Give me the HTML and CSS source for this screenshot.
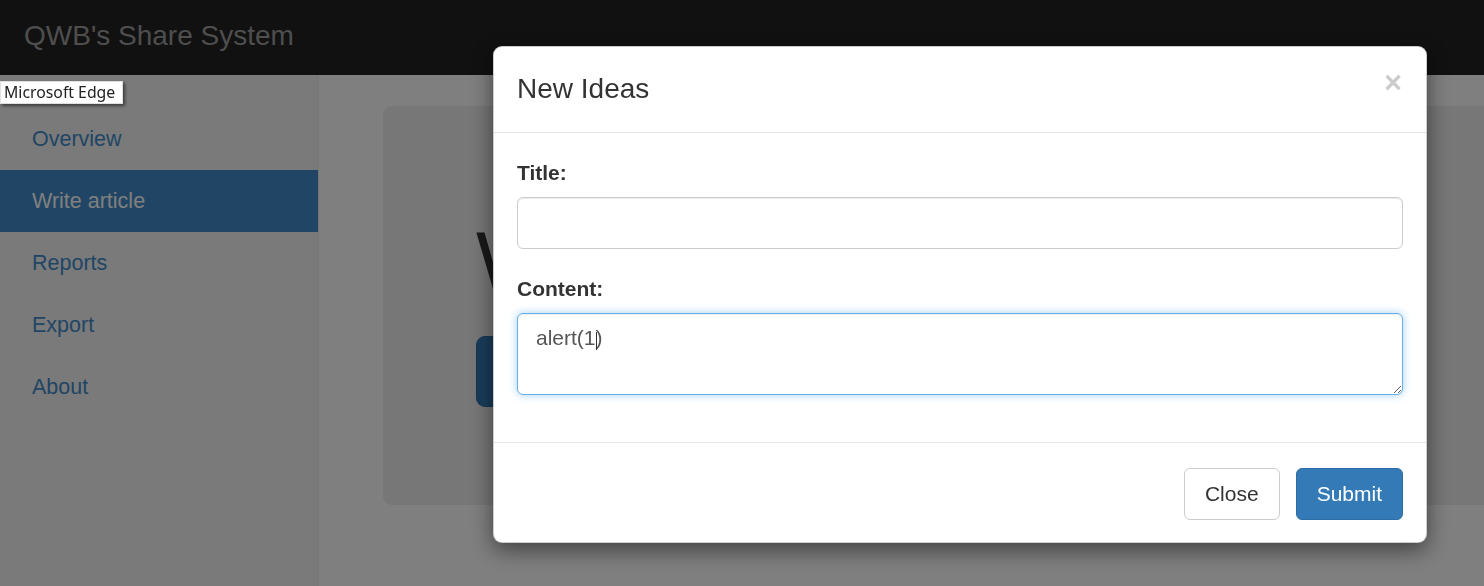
FILE: index.html
```html
<!DOCTYPE html>
<html lang="en">
<head>
<meta charset="utf-8">
<title>QWB's Share System</title>
<link rel="stylesheet" href="styles.css">
</head>
<body>
<header class="navbar">
  <a class="brand" href="#">QWB's Share System</a>
</header>
<div class="layout">
  <nav class="sidebar">
    <ul class="nav">
      <li><a href="#">Overview</a></li>
      <li class="active"><a href="#">Write article</a></li>
      <li><a href="#">Reports</a></li>
      <li><a href="#">Export</a></li>
      <li><a href="#">About</a></li>
    </ul>
  </nav>
  <main class="main">
    <section class="jumbotron">
      <h1 class="jumbo-title">Welcome!</h1>
      <a class="btn-lg" href="#">Share ideas</a>
    </section>
  </main>
</div>

<div class="backdrop"></div>

<div class="tooltip">Microsoft Edge</div>

<div class="modal" role="dialog">
  <div class="modal-header">
    <h4 class="modal-title">New Ideas</h4>
    <button class="close" type="button">&times;</button>
  </div>
  <div class="modal-body">
    <div class="form-group">
      <label class="label" for="title">Title:</label>
      <input class="input" id="title" type="text">
    </div>
    <div class="form-group last">
      <label class="label" for="content">Content:</label>
      <div class="textarea-wrap">
        <textarea class="textarea" id="content">alert(1)</textarea>
        <span class="caret"></span>
      </div>
    </div>
  </div>
  <div class="modal-footer">
    <button class="btn btn-default" type="button">Close</button>
    <button class="btn btn-primary" type="button">Submit</button>
  </div>
</div>
</body>
</html>
```

FILE: styles.css
```css
* { box-sizing: border-box; }

html, body {
  margin: 0;
  height: 100%;
}

body {
  font-family: "Liberation Sans", Arial, sans-serif;
  color: #333;
  background: #fff;
  overflow: hidden;
}

/* Navbar */
.navbar {
  height: 75px;
  background: #222;
  padding-left: 24px;
}

.brand {
  display: inline-block;
  font-size: 28px;
  line-height: 30px;
  padding-top: 21px;
  color: #9d9d9d;
  text-decoration: none;
}

/* Layout */
.layout {
  display: flex;
  height: calc(100% - 75px);
}

.sidebar {
  width: 319px;
  flex: 0 0 319px;
  background: #f5f5f5;
  border-right: 1px solid #eee;
  padding-top: 33px;
}

.nav {
  list-style: none;
  margin: 0;
  padding: 0;
}

.nav a {
  display: block;
  height: 62px;
  line-height: 62px;
  padding-left: 32px;
  font-size: 21.5px;
  color: #428bca;
  text-decoration: none;
}

.nav .active a {
  background: #428bca;
  color: #fff;
}

.main {
  flex: 1;
  padding: 31px 0 0 64px;
  min-width: 0;
}

.jumbotron {
  height: 399px;
  background: #eee;
  border-radius: 9px 0 0 9px;
  padding: 109px 0 0 93px;
}

.jumbo-title {
  margin: 0 0 29px;
  font-size: 84px;
  line-height: 92px;
  font-weight: 500;
  color: #333;
}

.btn-lg {
  display: inline-block;
  height: 71px;
  line-height: 69px;
  padding: 0 36px;
  font-size: 27px;
  color: #fff;
  background: #337ab7;
  border: 1px solid #2e6da4;
  border-radius: 9px;
  text-decoration: none;
}

/* Backdrop */
.backdrop {
  position: fixed;
  inset: 0;
  background: rgba(0, 0, 0, 0.5);
}

/* Tooltip */
.tooltip {
  position: fixed;
  left: 0;
  top: 81px;
  width: 123px;
  height: 23px;
  background: #fff;
  border: 1px solid #e0e0e0;
  box-shadow: 2px 2px 3px rgba(0, 0, 0, 0.5);
  font-family: "Noto Sans", "DejaVu Sans", sans-serif;
  font-size: 15.8px;
  line-height: 20px;
  color: #222;
  padding-left: 3px;
  white-space: nowrap;
}

/* Modal */
.modal {
  position: fixed;
  left: 493px;
  top: 46px;
  width: 934px;
  background: #fff;
  border: 1px solid rgba(0, 0, 0, 0.2);
  border-radius: 9px;
  box-shadow: 0 7px 22px rgba(0, 0, 0, 0.5);
}

.modal-header {
  display: flex;
  justify-content: space-between;
  align-items: flex-start;
  padding: 21px 23px 22px;
  border-bottom: 1px solid #e5e5e5;
}

.modal-title {
  margin: 0;
  font-size: 28px;
  line-height: 42px;
  font-weight: 400;
  color: #333;
}

.close {
  margin: -1px 1px 0 0;
  padding: 0;
  border: 0;
  background: transparent;
  font-family: "Liberation Sans", Arial, sans-serif;
  font-size: 31px;
  font-weight: 700;
  line-height: 1;
  color: #000;
  opacity: 0.2;
}

.modal-body {
  padding: 25px 23px 23px;
}

.form-group {
  margin-bottom: 25px;
}

.form-group.last {
  margin-bottom: 24px;
}

.label {
  display: block;
  font-size: 21px;
  line-height: 30px;
  font-weight: 700;
  margin-bottom: 9px;
  color: #333;
}

.input,
.textarea {
  display: block;
  width: 100%;
  font-family: "Liberation Sans", Arial, sans-serif;
  font-size: 21px;
  line-height: 30px;
  color: #555;
  background: #fff;
  border: 1px solid #ccc;
  border-radius: 6px;
  padding: 9px 18px;
  box-shadow: inset 0 1px 1px rgba(0, 0, 0, 0.075);
  outline: none;
}

.input {
  height: 52px;
}

.textarea-wrap {
  position: relative;
}

.textarea {
  height: 82px;
  resize: vertical;
  border-color: #66afe9;
  box-shadow: inset 0 1px 1px rgba(0, 0, 0, 0.075), 0 0 8px rgba(102, 175, 233, 0.6);
}

.caret {
  position: absolute;
  left: 79px;
  top: 19px;
  width: 1px;
  height: 18px;
  background: #333;
}

.modal-footer {
  display: flex;
  justify-content: flex-end;
  gap: 16px;
  padding: 25px 23px 22px;
  border-top: 1px solid #e5e5e5;
}

.btn {
  height: 52px;
  padding: 0 20px;
  font-family: "Liberation Sans", Arial, sans-serif;
  font-size: 21px;
  line-height: 50px;
  border-radius: 6px;
  border: 1px solid transparent;
}

.btn-default {
  background: #fff;
  color: #333;
  border-color: #ccc;
}

.btn-primary {
  background: #337ab7;
  color: #fff;
  border-color: #2e6da4;
}
```
